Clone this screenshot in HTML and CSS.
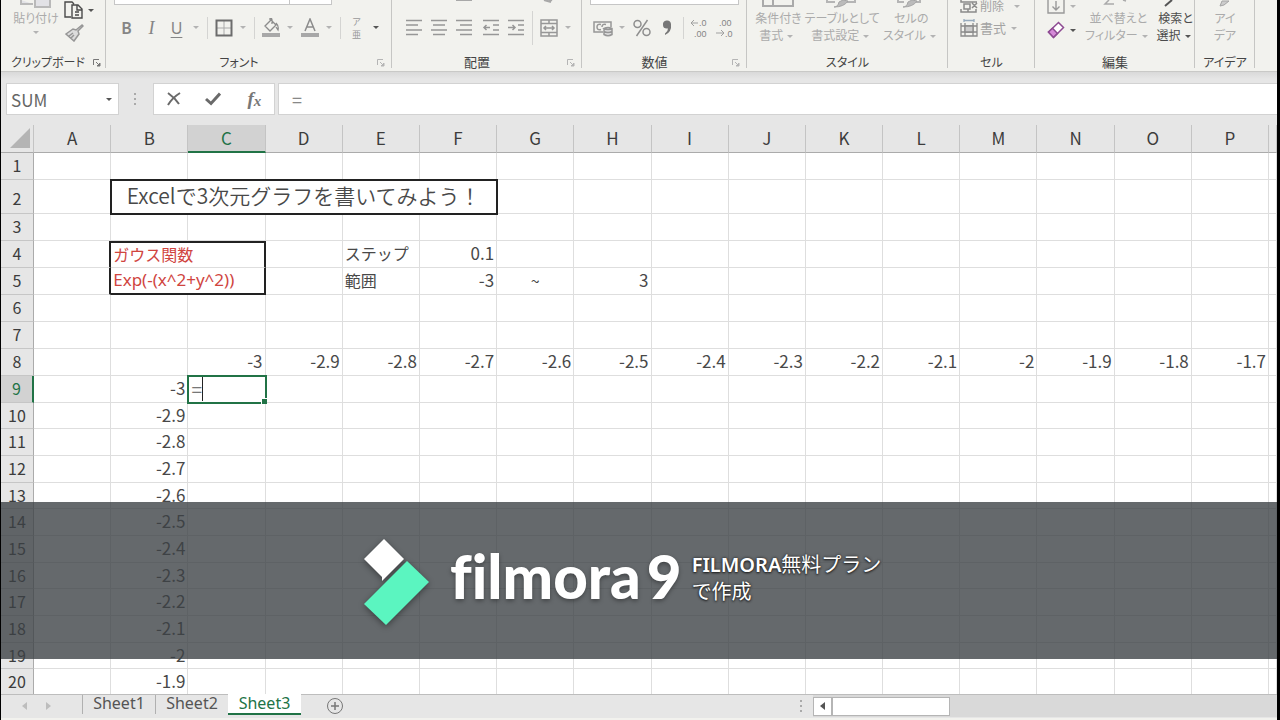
FILE: index.html
```html
<!DOCTYPE html>
<html lang="ja">
<head>
<meta charset="utf-8">
<title>Excel - Sheet3</title>
<link rel="stylesheet" href="styles.css">
</head>
<body>
<div class="app">
  <div class="ribbon">
    <section class="group g-clip">
      <div class="tools">
        <div class="paste">
          <svg width="32" height="9" viewBox="0 0 32 9"><path d="M1 0v4h12M15 0v7h15V0" fill="#e2e2e6" stroke="#b9b9b9" stroke-width="2"/></svg>
          <button class="big">貼り付け<i class="caret"></i></button>
        </div>
        <div class="clip-side">
          <button class="ico" aria-label="コピー"><svg width="20" height="20" viewBox="0 0 20 20" fill="none" stroke="#4a4a4a" stroke-width="1.4"><path d="M7 17H1V2h7l2 2M8 5h6l4 4v9H8zM13 5v5h5M11 12h4M11 15h4"/></svg></button><i class="caret on"></i>
          <button class="ico" aria-label="書式のコピー"><svg width="20" height="18" viewBox="0 0 20 18"><path d="M18 1l-6 5-3-1-7 5 8 7 5-7-1-3 5-5zM5 12l4-3m-2 5l3-3" fill="#dcdcdc" stroke="#969696" stroke-width="1.5"/></svg></button>
        </div>
      </div>
      <div class="name"><span>クリップボード</span><svg class="launch on" width="8" height="8" viewBox="0 0 8 8"><path d="M.5 6V.5H6M3 3l3 3"/><path d="M7 4v3H4z"/></svg></div>
    </section>

    <section class="group g-font">
      <div class="combo"><b></b><b></b></div>
      <div class="tools row">
        <button class="ico glyph bold">B</button><button class="ico glyph ital">I</button><button class="ico glyph under">U</button><i class="caret"></i><i class="sep"></i>
        <button class="ico" aria-label="罫線"><svg width="18" height="18" viewBox="0 0 18 18" fill="none"><path d="M9 2v14M2 9h14" stroke="#aaa"/><path d="M1.500 1.500h15v15h-15z" stroke="#6c6c6c" stroke-width="2"/></svg></button><i class="caret"></i><i class="sep"></i>
        <button class="ico" aria-label="塗りつぶし"><svg width="20" height="20" viewBox="0 0 20 20" fill="none" stroke="#8c8c8c" stroke-width="1.300"><path d="M4 8l6-6 5 5-6 6zM9 2v-1.500q2-1 2 2V6M15 5q3 3 2 7l-2-3"/><path d="M1 17h18" stroke="#a8a8a8" stroke-width="4"/></svg></button><i class="caret"></i>
        <button class="ico wide" aria-label="文字の色"><svg width="20" height="20" viewBox="0 0 20 20" fill="none" stroke="#8c8c8c" stroke-width="1.500"><path d="M5 13l5-12 5 12M6.500 9h7"/><path d="M1 17h18" stroke="#a8a8a8" stroke-width="4"/></svg></button><i class="caret"></i><i class="sep"></i>
        <button class="ico ruby">ア<br>亜</button><i class="caret on"></i>
      </div>
      <div class="name"><span>フォント</span><svg class="launch" width="8" height="8" viewBox="0 0 8 8"><path d="M.5 6V.5H6M3 3l3 3"/><path d="M7 4v3H4z"/></svg></div>
    </section>

    <section class="group g-align">
      <div class="stub"><svg width="180" height="3" viewBox="0 0 180 3"><path d="M56 0h16M144 0l7 2M152 0l-3 1" stroke="#a8a8a8" stroke-width="2"/></svg></div>
      <div class="tools row">
        <button class="ico" aria-label="左揃え"><svg width="18" height="18" viewBox="0 0 18 18" stroke="#979797" stroke-width="1.500"><path d="M1 1.500h16M1 6h12M1 11h16M1 15.500h12"/></svg></button>
        <button class="ico" aria-label="中央揃え"><svg width="18" height="18" viewBox="0 0 18 18" stroke="#979797" stroke-width="1.500"><path d="M1 1.500h16M3 6h12M1 11h16M3 15.500h12"/></svg></button>
        <button class="ico" aria-label="右揃え"><svg width="18" height="18" viewBox="0 0 18 18" stroke="#979797" stroke-width="1.500"><path d="M1 1.500h16M5 6h12M1 11h16M5 15.500h12"/></svg></button>
        <button class="ico gap" aria-label="インデントを減らす"><svg width="18" height="18" viewBox="0 0 18 18" fill="none" stroke="#979797" stroke-width="1.500"><path d="M1 1.500h16M11 6h6M11 11h6M1 15.500h16M8 8.500H2M4.500 6L2 8.500 4.500 11"/></svg></button>
        <button class="ico" aria-label="インデントを増やす"><svg width="18" height="18" viewBox="0 0 18 18" fill="none" stroke="#979797" stroke-width="1.500"><path d="M1 1.500h16M11 6h6M11 11h6M1 15.500h16M1 8.500h7M5.500 6L8 8.500 5.500 11"/></svg></button><i class="sep tall"></i>
        <button class="ico" aria-label="セルを結合"><svg width="18" height="18" viewBox="0 0 18 18" fill="none" stroke="#979797" stroke-width="1.500"><path d="M1 1h16v16H1zM1 4.500h16M1 13.500h16M9 1v3.500M9 13.500V17M4 9h10M6 7L4 9l2 2M12 7l2 2-2 2"/></svg></button><i class="caret"></i>
      </div>
      <div class="name"><span>配置</span><svg class="launch" width="8" height="8" viewBox="0 0 8 8"><path d="M.5 6V.5H6M3 3l3 3"/><path d="M7 4v3H4z"/></svg></div>
    </section>

    <section class="group g-num">
      <div class="combo"><b></b></div>
      <div class="tools row">
        <button class="ico wide" aria-label="通貨"><svg width="20" height="18" viewBox="0 0 20 18" fill="none" stroke="#979797" stroke-width="1.500"><path d="M10 13H1V3h17v5M8 5.500q-4-1-4 2.500t4 2.500M13 5.500q-4-1-4 2.500"/><path d="M11 9.500v6q4 2.500 8 0v-6q-4-2-8 0q4 2 8 0M11 12.500q4 2 8 0" fill="#ddd"/></svg></button><i class="caret"></i>
        <button class="ico" aria-label="パーセント"><svg width="18" height="18" viewBox="0 0 18 18" fill="none" stroke="#8e8e8e" stroke-width="1.500"><circle cx="4.500" cy="5" r="3.500"/><circle cx="13.500" cy="13" r="3.500"/><path d="M14.500 1l-11 16"/></svg></button>
        <button class="ico" aria-label="桁区切り"><svg width="10" height="16" viewBox="0 0 10 16"><path d="M1 5a4 4 0 0 1 8-1q1 8-6 11v-1.500q3-2 3-5Q1 9 1 5z" fill="#777"/></svg></button><i class="sep"></i>
        <button class="ico"><svg class="dec" width="22" height="22" viewBox="0 0 22 22"><path d="M9 6H2M5 3L2 6l3 3"/><text x="10" y="9">.0</text><text x="5" y="20">.00</text></svg></button>
        <button class="ico wide"><svg class="dec" width="22" height="22" viewBox="0 0 22 22"><path d="M2 16h8M7 13l3 3-3 3"/><text x="5" y="9">.00</text><text x="11" y="20">.0</text></svg></button>
      </div>
      <div class="name"><span>数値</span><svg class="launch" width="8" height="8" viewBox="0 0 8 8"><path d="M.5 6V.5H6M3 3l3 3"/><path d="M7 4v3H4z"/></svg></div>
    </section>

    <section class="group g-style">
      <div class="tools cols">
        <div><svg width="34" height="8" viewBox="0 0 34 8"><path d="M2 0v6h30V0M12 0v6" fill="none" stroke="#aaa" stroke-width="2"/></svg><button class="big">条件付き<br>書式<i class="caret"></i></button></div>
        <div><svg width="34" height="8" viewBox="0 0 34 8"><path d="M2 0v2h8M30 0v2h-8" fill="none" stroke="#b5b5b5" stroke-width="2"/><path d="M9 7q4 0 5-5l4-2 5 1q-4 6-14 6z" fill="#bbb" stroke="#a5a5a5"/></svg><button class="big">テーブルとして<br>書式設定<i class="caret"></i></button></div>
        <div><svg width="34" height="8" viewBox="0 0 34 8"><path d="M4 0v2h6M26 0v2h-4" fill="none" stroke="#b5b5b5" stroke-width="2"/><path d="M9 7q4 0 5-5l4-2 5 1q-4 6-14 6z" fill="#bbb" stroke="#a5a5a5"/></svg><button class="big">セルの<br>スタイル<i class="caret"></i></button></div>
      </div>
      <div class="name"><span>スタイル</span></div>
    </section>

    <section class="group g-cell">
      <div class="tools stack">
        <button class="line"><svg width="20" height="20" viewBox="0 0 20 20" fill="none" stroke="#8b8b8b" stroke-width="1.500"><path d="M2 4v2h16M5 8h6v5H5zM13 7l5 5M18 7l-5 5M2 13v3h15v-3M9 13v3"/></svg>削除<i class="caret far"></i></button>
        <button class="line"><svg width="20" height="20" viewBox="0 0 20 20" fill="none" stroke="#8b8b8b" stroke-width="1.300"><path d="M2 5v13h16V5M2 8h16M2 14h16M6 5v13M14 5v13"/><path d="M6 8h8v6H6z" fill="#ccc"/><path d="M5 2.500h10M5 1v3M15 1v3" stroke="#96aabd"/></svg>書式<i class="caret"></i></button>
      </div>
      <div class="name"><span>セル</span></div>
    </section>

    <section class="group g-edit">
      <div class="tools cols">
        <div class="stack">
          <button class="line" aria-label="フィル"><svg width="18" height="18" viewBox="0 0 18 18" fill="none" stroke="#999" stroke-width="1.400"><path d="M1 3v13h16V3M9 4v9M5.500 9.500L9 13l3.500-3.500"/></svg><i class="caret"></i></button>
          <button class="line" aria-label="クリア"><svg width="18" height="18" viewBox="0 0 18 18"><path d="M1.500 11l10-9.500 5 5-10 10z" fill="#fff" stroke="#8d4a92" stroke-width="1.500"/><path d="M1.500 11l4-3.800 5 5.200-4 4z" fill="#d58ad8" stroke="#8d4a92" stroke-width="1.500"/></svg><i class="caret on"></i></button>
        </div>
        <div><svg width="34" height="8" viewBox="0 0 34 8"><path d="M8 0L4 4h9M22 0l3 1" fill="none" stroke="#aaa" stroke-width="1.500"/></svg><button class="big">並べ替えと<br>フィルター<i class="caret"></i></button></div>
        <div><svg width="34" height="8" viewBox="0 0 34 8"><path d="M13 0L6 6" stroke="#555" stroke-width="2"/></svg><button class="big dark">検索と<br>選択<i class="caret on"></i></button></div>
      </div>
      <div class="name"><span>編集</span></div>
    </section>

    <section class="group g-idea">
      <div class="tools cols">
        <div><svg width="34" height="8" viewBox="0 0 34 8"><path d="M12 6l2-5h7l-5 4z" fill="#ccc" stroke="#a5a5a5"/></svg><button class="big">アイ<br>デア</button></div>
      </div>
      <div class="name"><span>アイデア</span></div>
    </section>
    <div class="rest"></div>
  </div>

  <div class="formula">
    <div class="namebox"><input type="text" value="SUM" aria-label="名前ボックス"><i class="caret on"></i></div>
    <svg class="dots" width="4" height="14" viewBox="0 0 4 14" fill="#aaa"><path d="M1 1h2v2H1zM1 6h2v2H1zM1 11h2v2H1z"/></svg>
    <div class="fx">
      <button aria-label="キャンセル"><svg width="14" height="14" viewBox="0 0 14 14" fill="none" stroke="#6a6a6a" stroke-width="2"><path d="M1 1q7 5 11 11M13 1Q5 6 1 13"/></svg></button>
      <button aria-label="入力"><svg width="16" height="14" viewBox="0 0 16 14" fill="none" stroke="#6a6a6a" stroke-width="3"><path d="M1 7l5 4.500L15 1.500"/></svg></button>
      <button class="fn"><em>f</em><em class="x">x</em></button>
    </div>
    <input class="expr" type="text" value="=" aria-label="数式バー">
  </div>

  <main class="sheet">
    <table id="grid"></table>
  </main>

  <footer class="tabs">
    <div class="nav"><button aria-label="前へ"><svg width="6" height="8" viewBox="0 0 6 8"><path d="M5 0v8L0 4z" fill="#bdbdbd"/></svg></button><button aria-label="次へ"><svg width="6" height="8" viewBox="0 0 6 8"><path d="M1 0v8l5-4z" fill="#bdbdbd"/></svg></button></div>
    <button class="tab">Sheet1</button><button class="tab">Sheet2</button><button class="tab active">Sheet3</button>
    <button class="add" aria-label="新しいシート"><svg width="18" height="18" viewBox="0 0 18 18" fill="none" stroke="#777"><circle cx="9" cy="9" r="7.500"/><path d="M9 5v8M5 9h8" stroke-width="1.500"/></svg></button>
    <div class="scroll">
      <svg class="dots" width="4" height="14" viewBox="0 0 4 14" fill="#aaa"><path d="M1 1h2v2H1zM1 6h2v2H1zM1 11h2v2H1z"/></svg>
      <div class="track"><button aria-label="左へ"><svg width="6" height="8" viewBox="0 0 6 8"><path d="M5 0v8L0 4z" fill="#555"/></svg></button><div class="thumb"></div></div>
    </div>
  </footer>
  <div class="status"></div>

  <div class="banner">
    <svg class="mark" width="67" height="90" viewBox="0 0 67 90"><path d="M21 1L41 21 19 43V39L1 21z" fill="#fff"/><path d="M44 23L66 44 23 87 1 66z" fill="#5bf5c0"/></svg>
    <div class="word">filmora</div><div class="nine">9</div>
    <p><b>FILMORA</b>無料プラン<br>で作成</p>
  </div>
</div>
<script src="script.js"></script>
</body>
</html>
```
FILE: styles.css
```css
* { box-sizing: border-box; }
html, body { height: 100%; }
body {
  margin: 0;
  padding: 0 3px 0 1px;
  background: #000;
  font-family: "Noto Sans CJK JP", "Noto Sans", sans-serif;
  color: #333;
  overflow: hidden;
}
button, input { font: inherit; color: inherit; border: 0; padding: 0; margin: 0; background: none; }
svg { display: block; flex: none; }
.app { position: relative; height: 100%; display: flex; flex-direction: column; background: #e6e6e6; }

/* ribbon */
.ribbon { flex: none; display: flex; height: 72px; background: #f2f2ee; border-bottom: 1px solid #c9c9c7; font-size: 12px; font-feature-settings: "palt"; overflow: hidden; }
.group { position: relative; min-width: 0; display: flex; flex-direction: column; justify-content: flex-end; }
.group::after { content: ""; position: absolute; right: 0; top: 0; bottom: 3px; width: 1px; background: #c6c6c4; }
.g-clip { flex: 105 1 0; }
.g-font { flex: 286 1 0; }
.g-align { flex: 190 1 0; }
.g-num { flex: 165 1 0; }
.g-style { flex: 201 1 0; }
.g-cell { flex: 87 1 0; }
.g-edit { flex: 160 1 0; }
.g-idea { flex: 60 1 0; }
.rest { flex: 22 1 0; }
.name { height: 20px; line-height: 20px; display: flex; align-items: center; justify-content: center; color: #444; white-space: nowrap; padding: 0 10px; margin-bottom: -1px; }
.g-font .name, .g-align .name, .g-num .name { padding-right: 30px; }
.g-align .name, .g-num .name, .g-edit .name { font-size: 13px; }
.launch { position: absolute; right: 7px; bottom: 4px; fill: #b5b5b5; stroke: #b5b5b5; stroke-width: 1; }
.launch path:first-child { fill: none; }
.launch.on { fill: #777; stroke: #777; right: 5px; }
.g-clip .name { justify-content: flex-start; }
.tools { display: flex; height: 52px; }
.row { height: 47px; align-items: center; padding: 0 0 2px 8px; }
.g-align .row { padding-left: 9px; }
.combo, .stub { height: 5px; padding: 0 8px; display: flex; flex: none; }
.combo b { background: #fff; border: 1px solid #c6c6c6; border-top: 0; flex: 1; }
.g-font .combo b { flex: 0 0 176px; }
.g-font .combo b + b { flex: 0 0 42px; border-left: 0; }
.ico { width: 25px; flex: none; display: flex; align-items: center; justify-content: center; }
.gap { margin-left: 2px; }
.caret { width: 14px; flex: none; display: inline-flex; justify-content: center; vertical-align: middle; }
.caret::before { content: ""; border: 3px solid transparent; border-top-color: #b3b3b3; border-bottom: 0; }
.caret.on::before { border-top-color: #555; }
.sep { width: 8px; flex: none; height: 22px; background: linear-gradient(#d4d4d2, #d4d4d2) center / 1px 100% no-repeat; }
.sep.tall { height: 34px; }
.glyph { font: 16px/20px "Noto Sans", sans-serif; color: #858585; }
.bold { font-weight: 600; }
.ital { font-family: "Liberation Serif", serif; font-style: italic; font-size: 18px; }
.under { text-decoration: underline; text-underline-offset: 3px; }
.ruby { font-size: 9px; line-height: 13px; color: #999; }
.dec { fill: none; stroke: #a0a0a0; stroke-width: 1; }
.dec text { font: 9px "Liberation Sans", sans-serif; fill: #858585; stroke: none; }
.big { color: #ababab; line-height: 17px; white-space: nowrap; display: block; }
.dark { color: #4c4c4c; }
.paste { width: 63px; padding-left: 7px; display: flex; flex-direction: column; align-items: center; }
.paste .caret { display: flex; width: 100%; padding-top: 5px; }
.clip-side { display: grid; grid-template-columns: 20px 18px; align-items: center; align-content: start; row-gap: 4px; }
.clip-side .ico { width: 20px; }
.cols { justify-content: center; gap: 2px; }
.cols > div { display: flex; flex-direction: column; align-items: center; gap: 1px; }
.g-style .cols { gap: 3px; }
.g-edit .cols { gap: 5px; justify-content: flex-start; padding-left: 12px; }
.stack { flex-direction: column; padding-left: 11px; gap: 2px; }
.g-edit .stack { padding: 0; gap: 4px; align-items: flex-start; }
.line { display: flex; align-items: center; height: 20px; color: #a3a3a3; font-size: 13px; line-height: 20px; white-space: nowrap; gap: 1px; }
.stack .line:first-child { margin-top: -4px; font-size: 12px; }
.far { margin-left: 5px; }

/* formula bar */
.formula { flex: none; height: 53px; padding: 11px 0 10px 5px; display: flex; align-items: stretch; background: linear-gradient(#d9d9d9, #e6e6e6 7px); }
.namebox { width: 113px; display: flex; align-items: center; background: #fff; border: 1px solid #d2d2d2; }
.namebox input { flex: 1; min-width: 0; padding: 2px 0 0 4px; font: 17px/24px "Noto Sans CJK JP", sans-serif; color: #666; }
.namebox .caret { width: 18px; }
.formula .dots { align-self: center; margin: 0 16px 0 14px; }
.fx { width: 122px; display: flex; background: #fff; border: 1px solid #d2d2d2; margin-right: 3px; }
.fx button { flex: 1; display: flex; align-items: center; justify-content: center; }
.fx .fn { font: 700 19px/20px "Liberation Serif", serif; color: #777; padding-left: 2px; }
.fn .x { font-size: 15px; padding-top: 4px; }
.expr { flex: 1; min-width: 0; background: #fff; border: 1px solid #d2d2d2; border-right: 0; padding-left: 13px; font-size: 18px; color: #888; }

/* worksheet */
.sheet { flex: 1; min-height: 0; overflow: hidden; background: #fff; }
table { width: 100%; table-layout: fixed; border-collapse: separate; border-spacing: 0; font-size: 16px; line-height: 20px; }
.c-head { width: 33px; }
.c-cut { width: 8px; }
th, td { height: 27px; padding: 0; border: solid #dedede; border-width: 0 1px 1px 0; white-space: nowrap; font-weight: 400; }
tbody tr:nth-child(2) > * { height: 34px; }
tbody tr:nth-child(3n + 10) > * { height: 26px; }
th { background: #e6e6e6; color: #3c3c3c; }
thead th { height: 28px; font-size: 17px; padding-bottom: 1px; border-color: #ababab; border-right-color: #c4c4c4; }
tbody th { border-color: #c6c6c6; border-right-color: #ababab; font-size: 16px; padding-bottom: 2px; }
tbody tr:nth-child(2) th { padding-top: 5px; }
.corner svg { margin-left: 8px; }
th.on { background: #d2d2d2; color: #217346; }
thead th.on { border-bottom: 2px solid #217346; padding: 0; }
tbody th.on { border-right: 2px solid #217346; }
td { text-align: right; padding: 0 2px 2px 2px; color: #484848; }
.num { font: 17px/20px "Noto Sans CJK JP", sans-serif; }
.text { text-align: left; }
.mid { text-align: center; }
.title { text-align: center; font-size: 21px; font-weight: 350; line-height: 24px; padding-bottom: 4px; outline: 2px solid #222; outline-offset: -1px; }
.pre { border-right: 2px solid #222; }
.red { text-align: left; color: #d0453f; border-right: 2px solid #222; padding-left: 2px; }
.red.top { border-top: 2px solid #222; }
.red.end { border-bottom: 2px solid #222; font: 17px/20px "Noto Sans", sans-serif; }
.edit { position: relative; text-align: left; outline: 2px solid #217346; outline-offset: -1px; color: #777; padding-bottom: 0; }
.edit span { display: inline-block; border-right: 1px solid #222; padding: 2px 0 2px 1px; font-size: 19px; }
.edit::after { content: ""; position: absolute; right: -2px; bottom: -2px; width: 5px; height: 5px; background: #217346; border: solid #fff; border-width: 1px 0 0 1px; }

/* sheet tabs */
.tabs { flex: none; height: 24px; display: flex; align-items: flex-start; border-top: 1px solid #bdbdbd; background: #e6e6e6; font: 16px/16px "Noto Sans", sans-serif; color: #555; }
.nav { width: 81px; height: 21px; display: flex; justify-content: center; gap: 17px; padding-right: 10px; }
.nav button { display: flex; align-items: center; }
.tab { width: 73px; border-left: 1px solid #b0b0b0; height: 19px; padding-bottom: 3px; }
.tab.active { background: #fff; color: #217346; border-left: 0; border-bottom: 2px solid #217346; margin-top: -1px; height: 21px; padding-bottom: 2px; }
.add { width: 68px; height: 22px; display: flex; align-items: center; justify-content: center; }
.scroll { margin-left: auto; width: 478px; display: flex; align-items: center; gap: 10px; }
.track { flex: 1; display: flex; height: 22px; background: #d9d9d9; align-items: center; }
.track button { width: 19px; height: 19px; background: #fff; border: 1px solid #b5b5b5; display: flex; align-items: center; justify-content: center; }
.thumb { width: 118px; height: 19px; background: #fff; border: 1px solid #b5b5b5; }
.status { flex: none; height: 2px; background: #f2f2ee; }

/* watermark laid over the sheet */
.banner { position: absolute; left: 0; right: 0; bottom: 61px; height: 157px; background: rgba(60, 65, 68, .79); display: flex; align-items: center; padding-left: 362px; color: #fff; }
.mark { filter: drop-shadow(0 2px 3px rgba(0, 0, 0, .4)); margin-top: 4px; }
.word, .nine { font: 900 60px/70px Lato, sans-serif; font-variant-ligatures: none; text-shadow: 0 2px 4px rgba(0, 0, 0, .35); margin-bottom: 10px; }
.word { margin-left: 20px; }
.nine { margin-left: 6px; }
.banner p { margin: 0 0 6px 10px; font-size: 20px; line-height: 26px; text-shadow: 0 0 3px #222, 0 1px 2px #222; white-space: nowrap; }
.banner p b { font-family: "Noto Sans", sans-serif; font-weight: 600; }
```
FILE: script.js
```javascript
const columns = "ABCDEFGHIJKLMNOP".split("");
const range = (n) => Array.from({ length: n }, (_, i) => String(Math.round((-3 + i * 0.1) * 10) / 10));

const cells = {
  A4: { t: "", c: "pre" },
  A5: { t: "", c: "pre" },
  B2: { t: "Excelで3次元グラフを書いてみよう！", c: "title", span: 5 },
  B4: { t: "ガウス関数", c: "red top", span: 2 },
  B5: { t: "Exp(-(x^2+y^2))", c: "red end", span: 2 },
  E4: { t: "ステップ", c: "text" },
  F4: { t: "0.1" },
  E5: { t: "範囲", c: "text" },
  F5: { t: "-3" },
  G5: { t: "~", c: "mid" },
  H5: { t: "3" }
};
range(14).forEach((v, i) => { cells[columns[i + 2] + "8"] = { t: v }; });
range(12).forEach((v, i) => { cells["B" + (i + 9)] = { t: v }; });
cells.C9 = { t: "<span>=</span>", c: "edit" };

let html = '<colgroup><col class="c-head">' + "<col>".repeat(16) + '<col class="c-cut"></colgroup>';
html += '<thead><tr><th class="corner"><svg width="22" height="22" viewBox="0 0 22 22"><path d="M21 1v20H1z" fill="#b4b4b4"/></svg></th>';
columns.forEach((c) => { html += `<th${c === "C" ? ' class="on"' : ""}>${c}</th>`; });
html += "<th></th></tr></thead><tbody>";
for (let r = 1; r <= 20; r++) {
  html += `<tr><th${r === 9 ? ' class="on"' : ""}>${r}</th>`;
  for (let i = 0; i < columns.length; i++) {
    const cell = cells[columns[i] + r];
    if (!cell) { html += "<td></td>"; continue; }
    html += `<td class="${cell.c || "num"}"${cell.span ? ` colspan="${cell.span}"` : ""}>${cell.t}</td>`;
    i += (cell.span || 1) - 1;
  }
  html += "<td></td></tr>";
}
document.getElementById("grid").innerHTML = html + "</tbody>";
```
